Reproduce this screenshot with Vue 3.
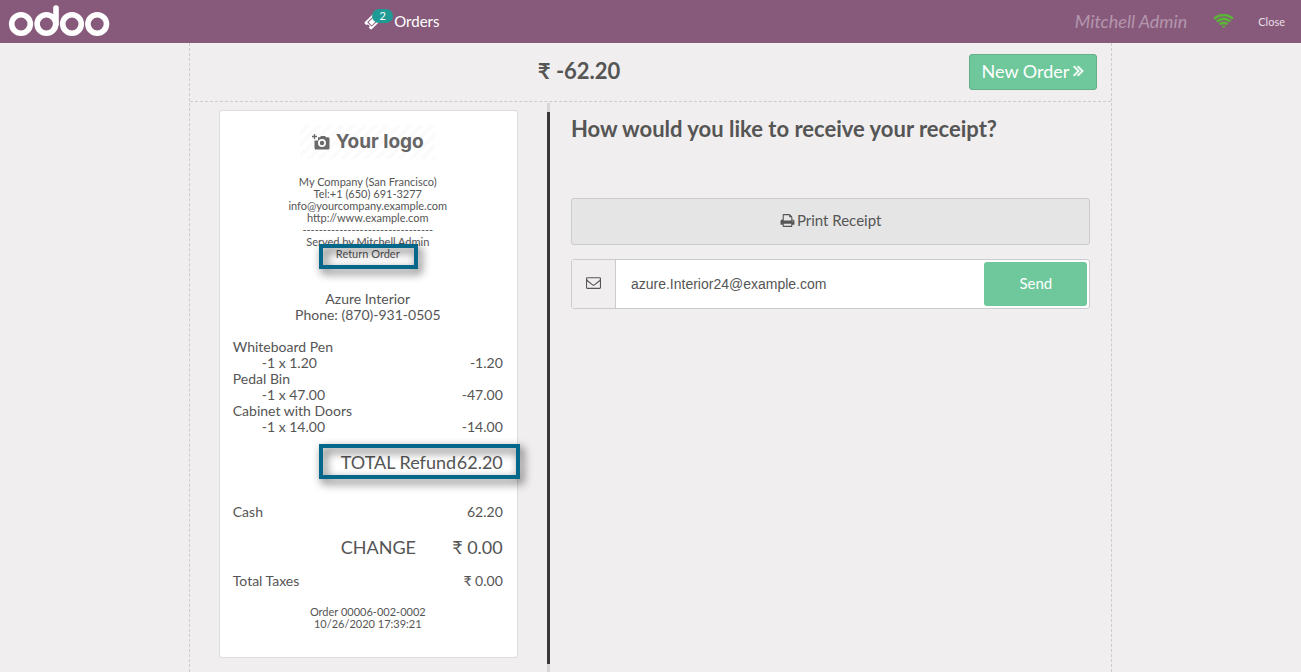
<script setup>
import { ref } from 'vue'

const email = ref('azure.Interior24@example.com')
const companyLines = [
  'My Company (San Francisco)',
  'Tel:+1 (650) 691-3277',
  'info@yourcompany.example.com',
  'http://www.example.com',
  '--------------------------------',
  'Served by Mitchell Admin',
]
const orderLines = [
  { name: 'Whiteboard Pen', qty: '-1 x 1.20', amount: '-1.20' },
  { name: 'Pedal Bin', qty: '-1 x 47.00', amount: '-47.00' },
  { name: 'Cabinet with Doors', qty: '-1 x 14.00', amount: '-14.00' },
]
</script>

<template>
  <div class="pos">
    <header class="topbar">
      <svg class="brand" viewBox="0 0 102 34" role="img" aria-label="odoo">
        <g fill="none" stroke="#fff" stroke-width="5.6">
          <circle cx="13" cy="20" r="9.3" />
          <circle cx="38.4" cy="20" r="9.3" />
          <circle cx="64" cy="20" r="9.3" />
          <circle cx="89.2" cy="20" r="9.3" />
          <path d="M48 20V4" stroke-linecap="round" />
        </g>
      </svg>
      <button class="orders" type="button">
        <span class="ticket">
          <svg viewBox="0 0 1792 1792" aria-hidden="true"><path fill="currentColor" d="M1024 452l316 316-572 572-316-316zm-211 979l618-618q19-19 19-45t-19-45l-362-362q-18-18-45-18t-45 18l-618 618q-19 19-19 45t19 45l362 362q18 18 45 18t45-18zm889-637l-907 908q-37 37-90.500 37t-90.500-37l-126-126q56-56 56-136t-56-136-136-56-136 56l-125-126q-37-37-37-90.500t37-90.500l907-906q37-37 90.500-37t90.500 37l125 125q-56 56-56 136t56 136 136 56 136-56l126 125q37 37 37 90.500t-37 90.500z" /></svg>
          <span class="count">2</span>
        </span>
        Orders
      </button>
      <div class="session">
        <span class="user">Mitchell Admin</span>
        <svg class="wifi" viewBox="0 160 2048 1363" role="img" aria-label="Connected"><path fill="currentColor" d="M1024 1523q-20 0-93-73.500t-73-93.500q0-32 62.500-54t103.500-22 103.500 22 62.500 54q0 20-73 93.500t-93 73.500zm270-271q-2 0-40-25t-101.500-50-128.500-25-128.500 25-101 50-40.500 25q-18 0-93.500-75t-75.500-93q0-13 10-23 78-77 196-121t233-44 233 44 196 121q10 10 10 23 0 18-75.500 93t-93.500 75zm273-272q-11 0-23-8-136-105-252-154.500t-268-49.500q-85 0-170.500 22t-149 53-113.500 62-79 53-31 22q-17 0-92-75t-75-93q0-12 10-22 132-132 320-205t380-73 380 73 320 205q10 10 10 22 0 18-75 93t-92 75zm271-271q-11 0-22-9-179-157-371.500-236.500t-420.500-79.500-420.500 79.500-371.500 236.500q-11 9-22 9-17 0-92.500-75t-75.500-93q0-13 10-23 187-186 445-288t527-102 527 102 445 288q10 10 10 23 0 18-75.500 93t-92.500 75z" /></svg>
        <button class="close" type="button">Close</button>
      </div>
    </header>

    <main class="screen">
      <div class="summary">
        <h1 class="amount">₹ -62.20</h1>
        <button class="next" type="button">
          New Order
          <svg viewBox="384 384 1024 1152" aria-hidden="true"><path fill="currentColor" stroke="currentColor" stroke-width="50" d="M979 960q0 13-10 23l-466 466q-10 10-23 10t-23-10l-50-50q-10-10-10-23t10-23l393-393-393-393q-10-10-10-23t10-23l50-50q10-10 23-10t23 10l466 466q10 10 10 23zm384 0q0 13-10 23l-466 466q-10 10-23 10t-23-10l-50-50q-10-10-10-23t10-23l393-393-393-393q-10-10-10-23t10-23l50-50q10-10 23-10t23 10l466 466q10 10 10 23z" /></svg>
        </button>
      </div>

      <div class="panes">
        <section class="receipt-pane" aria-label="Receipt">
          <article class="receipt">
            <div class="logo">
              <svg viewBox="0 0 18 16" aria-hidden="true">
                <path fill="#6a6a6a" fill-rule="evenodd" d="M6 3.200h2L9 2h4l1 1.200h2q1.500 0 1.500 1.500V14q0 1.500-1.500 1.500H4Q2.500 15.500 2.500 14V6.500H6zM10 5a4 4 0 1 0 0 8a4 4 0 1 0 0-8zM10 6.800a2.200 2.200 0 1 1 0 4.400a2.200 2.200 0 1 1 0-4.400z" />
                <path stroke="#6a6a6a" stroke-width="1.300" d="M2.500 0v5M0 2.500h5" />
              </svg>
              <span>Your logo</span>
            </div>
            <div class="small">
              <div v-for="line in companyLines" :key="line">{{ line }}</div>
              <div class="marked">Return Order<span class="frame frame-note"></span></div>
            </div>
            <div class="customer">
              <div>Azure Interior</div>
              <div>Phone: (870)-931-0505</div>
            </div>
            <div class="lines">
              <template v-for="line in orderLines" :key="line.name">
                <div>{{ line.name }}</div>
                <div class="row"><span class="qty">{{ line.qty }}</span><span>{{ line.amount }}</span></div>
              </template>
            </div>
            <div class="row big total marked">
              <span>TOTAL Refund</span><span>62.20</span><span class="frame frame-total"></span>
            </div>
            <div class="row cash"><span>Cash</span><span>62.20</span></div>
            <div class="row big change"><span>CHANGE</span><span>₹ 0.00</span></div>
            <div class="row taxes"><span>Total Taxes</span><span>₹ 0.00</span></div>
            <div class="small">
              <div>Order 00006-002-0002</div>
              <div>10/26/2020 17:39:21</div>
            </div>
          </article>
        </section>

        <div class="divider"></div>

        <section class="actions">
          <h2>How would you like to receive your receipt?</h2>
          <button class="print" type="button">
            <svg viewBox="0 0 1792 1792" aria-hidden="true"><path fill="currentColor" d="M448 1536h896v-256h-896v256zm0-640h896v-384h-160q-40 0-68-28t-28-68v-160h-640v640zm1152 64q0-26-19-45t-45-19-45 19-19 45 19 45 45 19 45-19 19-45zm128 0v416q0 13-9.500 22.500t-22.500 9.500h-224v160q0 40-28 68t-68 28h-960q-40 0-68-28t-28-68v-160h-224q-13 0-22.500-9.500t-9.500-22.500v-416q0-79 56.500-135.500t135.500-56.500h64v-544q0-40 28-68t68-28h672q40 0 88 20t76 48l152 152q28 28 48 76t20 88v256h64q79 0 135.500 56.500t56.500 135.500z" /></svg>
            Print Receipt
          </button>
          <form class="email" @submit.prevent>
            <label for="receipt-email" aria-label="Email address">
              <svg viewBox="0 0 1792 1792" aria-hidden="true"><path fill="currentColor" d="M1664 1504v-768q-32 36-69 66-268 206-426 338-51 43-83 67t-86.500 48.500-102.500 24.500h-2q-48 0-102.500-24.500t-86.500-48.500-83-67q-158-132-426-338-37-30-69-66v768q0 13 9.500 22.500t22.500 9.500h1472q13 0 22.500-9.500t9.500-22.500zm0-1051v-24.500l-.5-13-3-12.500-5.500-9-9-7.500-14-2.500h-1472q-13 0-22.500 9.500t-9.500 22.500q0 168 147 284 193 152 401 317 6 5 35 29.500t46 37.500 44.500 31.500 50.500 27.500 43 9h2q20 0 43-9t50.500-27.500 44.500-31.500 46-37.500 35-29.500q208-165 401-317 54-43 100.500-115.500t46.500-131.500zm128-37v1088q0 66-47 113t-113 47h-1472q-66 0-113-47t-47-113v-1088q0-66 47-113t113-47h1472q66 0 113 47t47 113z" /></svg>
            </label>
            <input id="receipt-email" v-model="email" type="email" />
            <button type="submit">Send</button>
          </form>
        </section>
      </div>
    </main>
  </div>
</template>

<style>
body {
  margin: 0;
  background: #f0eeee;
}
</style>

<style scoped>
.pos {
  display: flex;
  flex-direction: column;
  min-height: 100vh;
  font: 14px/16px Lato, "Liberation Sans", sans-serif;
  color: #555;
}
.pos * {
  box-sizing: border-box;
}
button {
  padding: 0;
  border: 0;
  background: none;
  font-family: inherit;
  color: inherit;
  cursor: pointer;
}
.topbar {
  display: grid;
  grid-template-columns: 28% 1fr auto;
  align-items: center;
  height: 43px;
  padding-bottom: 1px;
  background: #875a7b;
  color: #fff;
}
.brand {
  width: 102px;
  height: 34px;
  margin-left: 8px;
}
.orders {
  display: flex;
  align-items: center;
  gap: 12px;
  justify-self: start;
  font-size: 15px;
}
.ticket {
  position: relative;
  display: flex;
}
.ticket svg {
  width: 18px;
  height: 18px;
}
.count {
  position: absolute;
  left: 8px;
  top: -3px;
  width: 21px;
  border-radius: 8px;
  background: #1f9a95;
  font-size: 11px;
  line-height: 14px;
}
.session {
  display: flex;
  align-items: center;
  padding-right: 16px;
}
.user {
  font-size: 18px;
  font-style: italic;
  color: #b496ad;
}
.wifi {
  width: 21px;
  height: 14px;
  margin: 0 24px 0 26px;
  color: #5bb536;
}
.close {
  font-size: 11px;
  color: #eadfe7;
}
.screen {
  display: flex;
  flex-direction: column;
  flex: 1;
  width: 71%;
  margin: 0 auto;
  border: dashed #ccc;
  border-width: 0 1px;
}
.summary {
  display: flex;
  align-items: center;
  height: 59px;
  padding-right: 14px;
  border-bottom: 1px dashed #ccc;
}
h1,
h2 {
  margin: 0;
  font-size: 22px;
  line-height: 28px;
  font-weight: 700;
}
.amount {
  flex: 1;
  padding-bottom: 2px;
  text-align: center;
}
.next {
  display: flex;
  align-items: center;
  gap: 4px;
  height: 36px;
  padding: 0 12px 2px;
  border: 1px solid #64af8a;
  border-radius: 3px;
  background: #6ec89b;
  color: #fff;
  font-size: 18px;
}
.next svg {
  width: 11px;
  height: 12px;
}
.panes {
  flex: 1;
  display: grid;
  grid-template-columns: 7fr 3px 11fr;
}
.receipt-pane {
  display: flex;
  justify-content: center;
  align-items: flex-start;
  padding: 8px 0 14px;
}
.receipt {
  width: 299px;
  padding: 14px 14px 27px 13px;
  border: 1px solid #dcdcdc;
  border-radius: 3px;
  background: #fff;
}
.logo {
  display: flex;
  justify-content: center;
  align-items: center;
  gap: 6px;
  width: 50%;
  height: 34px;
  margin: 0 auto 17px;
  background: repeating-linear-gradient(135deg, #fff 0 4px, #fbfbfb 4px 8px);
  color: #666;
  font: 700 19px/34px Inter, sans-serif;
  white-space: nowrap;
}
.logo svg {
  width: 18px;
  height: 16px;
}
.small {
  font-size: 11px;
  line-height: 12px;
  text-align: center;
}
.marked {
  position: relative;
}
.frame {
  position: absolute;
  border: 4px solid #05678a;
  filter: drop-shadow(3px 4px 5px rgba(0, 0, 0, 0.7));
  pointer-events: none;
}
.frame-note {
  top: -4px;
  left: 50%;
  width: 99px;
  height: 25px;
  margin-left: -49px;
}
.frame-total {
  top: -8px;
  right: -17px;
  width: 201px;
  height: 35px;
}
.customer {
  margin: 31px 0 16px;
  text-align: center;
}
.row {
  display: flex;
  justify-content: space-between;
}
.qty {
  padding-left: 29px;
}
.big {
  padding-left: 40%;
  font-size: 18px;
  line-height: 20px;
}
.total {
  margin: 17px 0 32px;
}
.change {
  margin: 17px 0 16px;
}
.taxes {
  margin-bottom: 17px;
}
.divider {
  margin-top: 1px;
  background: linear-gradient(#393939, #393939) center / 100% calc(100% - 17px) no-repeat #d6d6d6;
}
.actions {
  padding: 13px 21px;
}
.print {
  display: flex;
  justify-content: center;
  align-items: center;
  gap: 2px;
  width: 100%;
  height: 47px;
  padding-bottom: 3px;
  margin: 55px 0 14px;
  border: 1px solid #ccc;
  border-radius: 3px;
  background: #e5e5e5;
  font-size: 15px;
}
.print svg,
.email svg {
  width: 15px;
  height: 15px;
}
.email {
  display: flex;
  height: 50px;
  border: 1px solid #ccc;
  border-radius: 3px;
  background: #fff;
}
.email label {
  display: flex;
  justify-content: center;
  align-items: center;
  width: 44px;
  padding-bottom: 3px;
  border-right: 1px solid #ccc;
  background: #f0eeee;
}
.email input {
  flex: 1;
  min-width: 0;
  padding: 0 15px 1px;
  border: 0;
  background: none;
  color: #555;
  font: 14px "Liberation Sans", Arial, sans-serif;
}
.email button {
  width: 103px;
  padding-bottom: 2px;
  margin: 2px;
  border-radius: 3px;
  background: #6ec89b;
  color: #fff;
  font-size: 15px;
}
</style>
